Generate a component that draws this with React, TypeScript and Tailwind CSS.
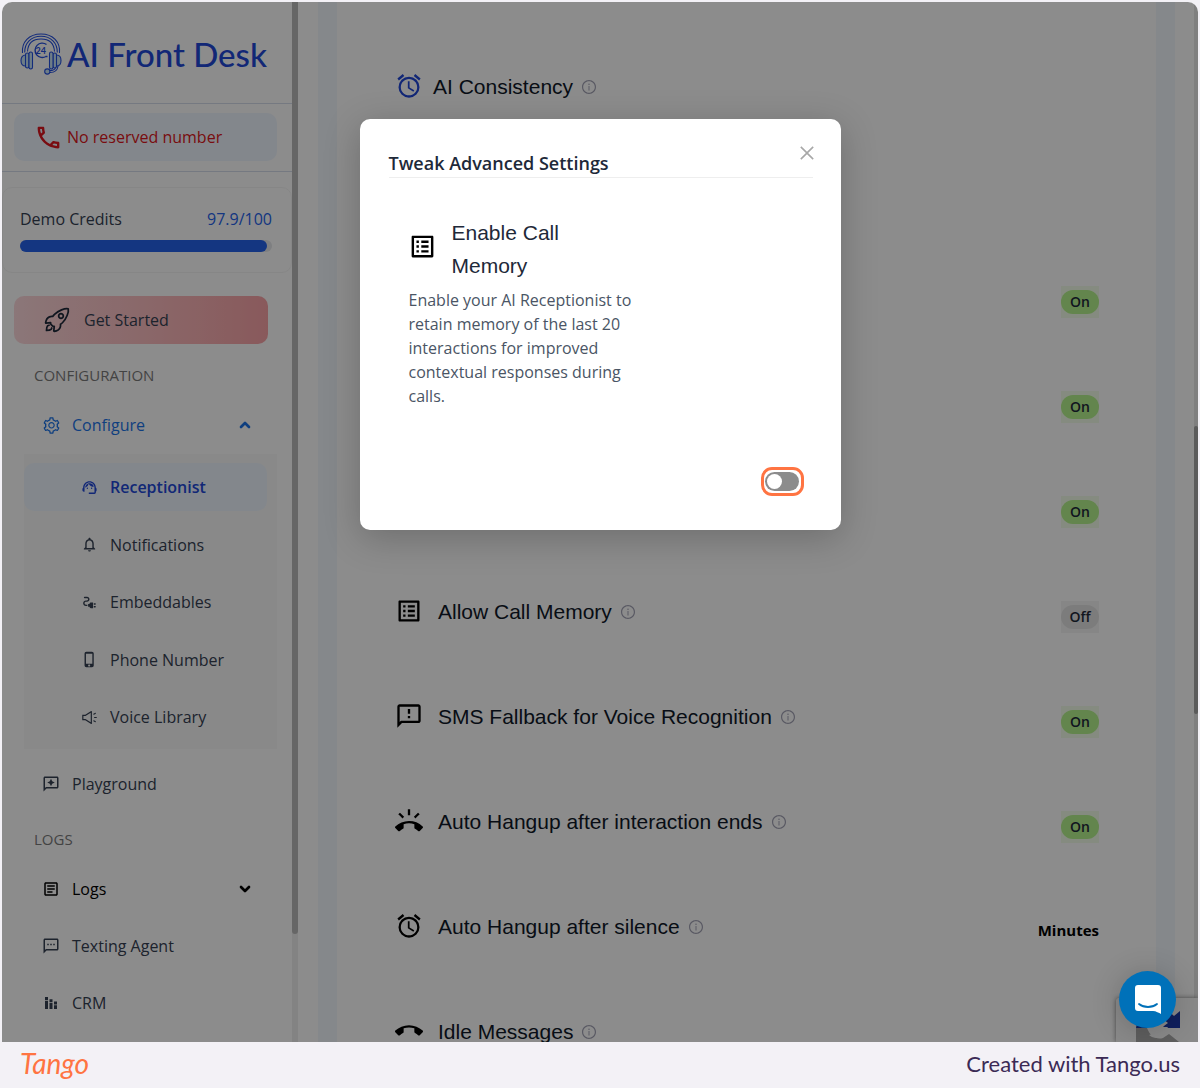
import React, { useState } from 'react';
import {
  MdOutlineAlarm, MdOutlineListAlt, MdOutlineFeedback, MdRingVolume, MdCallEnd, MdOutlineCall, MdOutlineSms, MdSupportAgent,
  MdPhoneIphone, MdNotificationsNone, MdOutlineElectricalServices, MdOutlineReviews, MdOutlineArticle, MdStackedBarChart,
} from 'react-icons/md';
import { AiOutlineInfoCircle, AiOutlineClose, AiOutlineSetting, AiOutlineSound } from 'react-icons/ai';
import { IoRocketOutline } from 'react-icons/io5';
import { ChevronDown, ChevronUp } from 'lucide-react';
import type { IconType } from 'react-icons';

interface NavItem { label: string; icon: IconType; active?: boolean }
interface SettingRow { title?: string; icon?: IconType; badge?: 'On' | 'Off' | 'Minutes'; accent?: boolean }

const CONFIGURE_ITEMS: NavItem[] = [
  { label: 'Receptionist', icon: MdSupportAgent, active: true },
  { label: 'Notifications', icon: MdNotificationsNone },
  { label: 'Embeddables', icon: MdOutlineElectricalServices },
  { label: 'Phone Number', icon: MdPhoneIphone },
  { label: 'Voice Library', icon: AiOutlineSound },
];

const SETTINGS: SettingRow[] = [
  { title: 'AI Consistency', icon: MdOutlineAlarm, accent: true },
  {},
  { badge: 'On' },
  { badge: 'On' },
  { badge: 'On' },
  { title: 'Allow Call Memory', icon: MdOutlineListAlt, badge: 'Off' },
  { title: 'SMS Fallback for Voice Recognition', icon: MdOutlineFeedback, badge: 'On' },
  { title: 'Auto Hangup after interaction ends', icon: MdRingVolume, badge: 'On' },
  { title: 'Auto Hangup after silence', icon: MdOutlineAlarm, badge: 'Minutes' },
  { title: 'Idle Messages', icon: MdCallEnd },
];

const HeadsetLogo: React.FC = () => (
  <svg width="42" height="42" viewBox="0 0 42 42" fill="none" stroke="#2450e0" strokeWidth="1.1" className="shrink-0" aria-hidden="true">
    <path d="M2.500 20C1.500 9 9 1 21 1S40.500 9 39.500 20" />
    <path d="M4.700 19.500C4.500 10 11 3.200 21 3.200S37.500 10 37.300 19.500" />
    <path d="M7.500 18.500C8 10.500 13 6 21 6S34 10.500 34.500 18.500" />
    <path d="M5.500 22C2.500 22 1 24.500 1 27.500S2.500 33 5.500 33" fill="#c9e4f5" />
    <path d="M36.500 22C39.500 22 41 24.500 41 27.500S39.500 33 36.500 33" fill="#c9e4f5" />
    <rect x="5.500" y="20" width="3.500" height="15" rx="1.700" fill="#c9e4f5" />
    <rect x="9" y="19" width="3.500" height="17" rx="1.700" fill="#c9e4f5" />
    <rect x="33" y="20" width="3.500" height="15" rx="1.700" fill="#c9e4f5" />
    <rect x="29.500" y="19" width="3.500" height="17" rx="1.700" fill="#c9e4f5" />
    <path d="M38 33C37.500 37.500 34 39.500 30 39.500M35.500 35C34.500 37 33 37.500 30 37.500" />
    <circle cx="27.300" cy="38.500" r="2.600" fill="#c9e4f5" />
    <path d="M26.500 11.500A7.200 7.200 0 1 0 26 23.500M25.500 23.500h2" strokeWidth="1.400" />
    <text x="15.500" y="20.500" fontSize="9" fontWeight="700" fontFamily="Lato, sans-serif" fill="#2450e0" stroke="none">24</text>
  </svg>
);

const Sidebar: React.FC = () => (
  <aside className="w-[290px] shrink-0 overflow-hidden bg-white text-base text-gray-700">
    <div className="flex h-[102px] items-center gap-[5px] border-b border-[#d5dcec] px-[18px] pt-[2px]">
      <HeadsetLogo />
      <span className="whitespace-nowrap font-['Lato',sans-serif] text-[33px] font-medium leading-10 text-[#2148d8]">AI Front Desk</span>
    </div>

    <div className="border-b border-[#d5dcec] pb-[10px] pl-3 pr-[15px] pt-[9px]">
      <div className="flex h-12 items-center gap-1 rounded-[10px] bg-[#eff6ff] pl-5 text-[#dc1620]">
        <MdOutlineCall size={29} />
        <span>No reserved number</span>
      </div>
    </div>

    <div className="mt-[15px] rounded-[10px] border border-[#f5f5f5] pb-5 pl-[17px] pr-[19px] pt-[19px]">
      <div className="flex items-center justify-between font-medium">
        <label htmlFor="credits">Demo Credits</label>
        <span className="text-[#2563eb]">97.9/100</span>
      </div>
      <div id="credits" className="mt-[9px] h-3 rounded-full bg-gray-200">
        <div className="h-full w-[98%] rounded-full bg-[#2563eb]" />
      </div>
    </div>

    <button className="ml-3 mt-[23px] flex h-12 w-[254px] items-center gap-[13px] rounded-[10px] bg-linear-to-r from-[#fdd9dc] to-[#f9a3a7] pl-[29px]">
      <IoRocketOutline size={28} className="text-gray-800" />
      Get Started
    </button>

    <h2 className="mt-[19px] pl-8 text-[15px] leading-6 text-[#7b7b7b]">CONFIGURATION</h2>

    <a href="#configure" className="mt-[14px] flex h-12 items-center pl-10 pr-[39px] text-[#1d74e8]">
      <AiOutlineSetting size={19} />
      <span className="ml-[11px] flex-1">Configure</span>
      <ChevronUp size={16} strokeWidth={4} />
    </a>

    <ul className="ml-[22px] mr-[15px] mt-[5px] flex h-[295px] flex-col justify-between bg-[#fafafa] pb-2 pt-[9px]">
      {CONFIGURE_ITEMS.map(({ label, icon: Icon, active }) => (
        <li key={label}>
          <a href="#configure" className={`mr-[10px] flex h-12 items-center gap-3 rounded-[10px] pl-[57px] ${active ? 'bg-[#eff6ff] font-semibold text-[#2148d8]' : ''}`}>
            <Icon size={17} />
            {label}
          </a>
        </li>
      ))}
    </ul>

    <a href="#playground" className="mt-[11px] flex h-12 items-center gap-3 pl-10"><MdOutlineReviews size={18} />Playground</a>

    <h2 className="mt-[19px] pl-8 text-[15px] leading-6 text-[#7b7b7b]">LOGS</h2>

    <a href="#logs" className="mt-[14px] flex h-12 items-center pl-10 pr-[39px] text-black">
      <MdOutlineArticle size={18} />
      <span className="ml-3 flex-1">Logs</span>
      <ChevronDown size={16} strokeWidth={4} />
    </a>
    <a href="#texting" className="mt-[9px] flex h-12 items-center gap-3 pl-10"><MdOutlineSms size={18} />Texting Agent</a>
    <a href="#crm" className="mt-[9px] flex h-12 items-center gap-3 pl-10"><MdStackedBarChart size={18} />CRM</a>
  </aside>
);

const Badge: React.FC<{ value: 'On' | 'Off' | 'Minutes' }> = ({ value }) => {
  if (value === 'Minutes') return <span className="mt-2 font-bold text-black text-[15px]">Minutes</span>;
  const on = value === 'On';
  return (
    <span className={`mt-[10px] flex h-8 items-center ${on ? 'bg-[#f3fdea]' : 'bg-[#f5f5f5]'}`}>
      <span className={`flex h-6 w-[38px] items-center justify-center rounded-full text-sm font-semibold text-gray-800 ${on ? 'bg-[#b4f28c]' : 'bg-[#e2e2e2]'}`}>{value}</span>
    </span>
  );
};

const Settings: React.FC = () => (
  <main className="flex min-w-0 flex-1 overflow-hidden bg-white pl-5 pr-[19px]">
    <div className="min-w-0 flex-1 border-x-[19px] border-[#f3f8fd] bg-white pl-[58px] pr-[57px] pt-8">
      {SETTINGS.map(({ title, icon: Icon, badge, accent }, i) => (
        <div key={i} className="flex h-[105px] items-center justify-between">
          <div className="flex items-center">
            {Icon && <Icon size={28} className={`mb-[2px] ${accent ? 'mr-[10px] text-[#2148d8]' : 'mr-[15px] text-black'}`} />}
            {title && <h3 className="font-['Liberation_Sans',Arial,sans-serif] text-[21px] leading-7 text-gray-900">{title}</h3>}
            {title && <AiOutlineInfoCircle size={16} className="ml-2 text-[#a3a3b5]" />}
          </div>
          {badge && <Badge value={badge} />}
        </div>
      ))}
    </div>
  </main>
);

const AdvancedSettingsModal: React.FC = () => {
  const [enabled, setEnabled] = useState(false);
  return (
    <div role="dialog" aria-labelledby="modal-title" className="relative w-[481px] rounded-[10px] bg-white pb-[34px] pl-[29px] pr-7 pt-7 shadow-[0_8px_36px_rgba(0,0,0,0.22)]">
      <button aria-label="Close" className="absolute right-6 top-6 text-[#a8a8a8]"><AiOutlineClose size={20} /></button>
      <h2 id="modal-title" className="border-b border-[#eeeeee] pt-[2px] text-lg font-semibold leading-7 text-gray-800">Tweak Advanced Settings</h2>
      <div className="mt-[38px] flex w-[230px] items-center pl-[19px]">
        <MdOutlineListAlt size={29} className="mb-[6px] shrink-0 text-black" />
        <h3 className="ml-[15px] font-['Liberation_Sans',Arial,sans-serif] text-[21px] leading-[33px] text-gray-800">Enable Call Memory</h3>
      </div>
      <p className="ml-5 mt-[6px] w-[230px] text-base text-gray-600">
        Enable your AI Receptionist to retain memory of the last 20 interactions for improved contextual responses during calls.
      </p>
      <div className="mr-[9px] mt-[59px] flex justify-end">
        <label className="flex h-[29px] w-[43px] cursor-pointer items-center justify-center rounded-[11px] border-[3px] border-[#ff7442]">
          <input type="checkbox" role="switch" aria-label="Enable call memory" className="peer sr-only" checked={enabled} onChange={e => setEnabled(e.target.checked)} />
          <span className="flex h-[19px] w-[34px] items-center rounded-full bg-[#8c8c8c] px-[2px] peer-checked:justify-end peer-checked:bg-[#2563eb]">
            <span className="size-[15px] rounded-full bg-white" />
          </span>
        </label>
      </div>
    </div>
  );
};

const App: React.FC = () => (
  <div className="flex h-screen flex-col overflow-hidden bg-[#f3f1f6] px-[2px] pt-[2px] font-['Open_Sans','Noto_Sans',sans-serif]">
    <div className="relative flex min-h-0 flex-1 overflow-hidden rounded-t-[10px] bg-white">
      <Sidebar />
      <div className="w-[6px] shrink-0 bg-[#eeeeee] pb-[108px]"><div className="h-full rounded-b-full bg-[#bababa]" /></div>
      <Settings />
      <div className="w-1 shrink-0 bg-[#e8e8e8] pt-[424px]"><div className="h-72 rounded-full bg-[#a6a6a6]" /></div>

      {/* reCAPTCHA corner */}
      <div className="absolute bottom-0 right-0 h-[44px] w-[82px] overflow-hidden rounded-tl-[3px] bg-[#fafafa] shadow-[0_0_5px_gray]">
        <svg width="82" height="44" viewBox="0 0 82 44" aria-hidden="true">
          <path d="M64 13v17H45l7-5C45 18 36 20 31 25v5H20C22 12 44 4 58 18z" fill="#1c3aa9" />
          <path d="M20 30h11c3 8 9 12 16 10l6-4 10 8H20z" fill="#ababab" />
          <path d="M33 37c6-1 9-9 18-13l-4 5h5l-5 8c-5 4-11 3-14 0z" fill="#fafafa" />
        </svg>
      </div>

      <div className="absolute inset-0 flex items-start justify-center bg-black/45 pt-[117px]">
        <AdvancedSettingsModal />
      </div>

      <button aria-label="Open chat" className="absolute bottom-[14px] right-[22px] flex size-[57px] items-center justify-center rounded-full bg-[#0071b9] shadow-[0_2px_30px_rgba(0,0,0,0.2)]">
        <svg width="26" height="30" viewBox="0 0 26 30" aria-hidden="true">
          <path d="M3 0h20a3 3 0 0 1 3 3v26c-2-1-5-3-8-3H3a3 3 0 0 1-3-3V3a3 3 0 0 1 3-3z" fill="#fff" />
          <path d="M4 19c5 4 13 4 18 0" fill="none" stroke="#0071b9" strokeWidth="1.800" strokeLinecap="round" />
        </svg>
      </button>
    </div>

    <footer className="flex h-[46px] shrink-0 items-center justify-between px-[18px] pb-1 font-['Lato',sans-serif]">
      <span className="text-[28px] italic text-[#ff7442]">Tango</span>
      <span className="text-[22px] text-[#3b2a55]">Created with Tango.us</span>
    </footer>
  </div>
);

export default App;
